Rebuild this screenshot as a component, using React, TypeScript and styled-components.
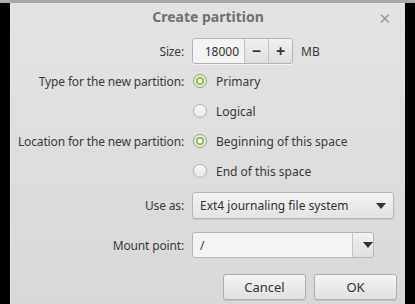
import React, { FC } from 'react'
import styled, { createGlobalStyle } from 'styled-components'

const GlobalStyle = createGlobalStyle`
  html, body {
    margin: 0;
    padding: 0;
    background: #000;
    overflow: hidden;
  }
  body {
    font-family: "Noto Sans", "DejaVu Sans", sans-serif;
  }
`

const Screen = styled.div`
  width: 415px;
  height: 304px;
  display: flex;
  flex-direction: column;
  background: #000;
`
const TopStrip = styled.div`
  height: 3px;
  background: #a9a9a9;
`
const Stage = styled.div`
  flex: 1;
  display: flex;
  padding: 0 10px;
`
const Dialog = styled.section`
  flex: 1;
  display: flex;
  flex-direction: column;
  background: linear-gradient(#e3e3e3, #d8d8d8);
  border-left: 1px solid #ededed;
  color: #3a3a3a;
  font-size: 12px;
`
const TitleBar = styled.header`
  height: 27px;
  display: flex;
  align-items: center;
  justify-content: center;
  position: relative;
`
const Title = styled.h2`
  margin: 0;
  font-size: 14px;
  font-weight: bold;
  color: #707070;
`
const Close = styled.span`
  position: absolute;
  right: 14px;
  top: 5px;
  font-size: 15px;
  font-weight: bold;
  color: #9a9a9a;
`
const Form = styled.div`
  display: grid;
  grid-template-columns: 173px 1fr;
  column-gap: 8px;
  padding: 7px 11px 0 0;
  align-items: center;
`
const Label = styled.span<{ $h: number; $mt?: number }>`
  height: ${p => p.$h}px;
  margin-top: ${p => p.$mt ?? 0}px;
  display: flex;
  align-items: center;
  justify-content: flex-end;
  white-space: nowrap;
  letter-spacing: -0.15px;
`
const Cell = styled.div<{ $h: number; $mt?: number }>`
  height: ${p => p.$h}px;
  margin-top: ${p => p.$mt ?? 0}px;
  display: flex;
  align-items: center;
  white-space: nowrap;
`
const Spin = styled.div`
  width: 99px;
  height: 24px;
  display: flex;
  border: 1px solid #b3b3b3;
  border-radius: 3px;
  overflow: hidden;
  box-shadow: 0 1px 0 rgba(255,255,255,0.6);
`
const SpinEntry = styled.span`
  flex: 1;
  display: flex;
  align-items: center;
  justify-content: flex-end;
  padding-right: 5px;
  background: #f4f4f4;
  color: #333;
`
const SpinButton = styled.span`
  width: 23px;
  display: flex;
  align-items: center;
  justify-content: center;
  border-left: 1px solid #c2c2c2;
  background: linear-gradient(#f1f1f1, #dedede);
  font-size: 16px;
  font-weight: bold;
  color: #333;
`
const Unit = styled.span`
  margin-left: 8px;
`
const Radio = styled.span<{ $on?: boolean }>`
  width: 12px;
  height: 12px;
  border-radius: 50%;
  margin-left: 1px;
  margin-right: 9px;
  border: 1px solid ${p => (p.$on ? '#8ea660' : '#b4b4b4')};
  background: ${p =>
    p.$on
      ? 'radial-gradient(circle, #f7fbe9 0 2px, #9db86a 2.5px 4px, #e7eed8 4.5px)'
      : 'linear-gradient(#fafafa, #e8e8e8)'};
`
const Combo = styled.div`
  flex: 1;
  height: 25px;
  display: flex;
  align-items: center;
  padding: 0 7px;
  border: 1px solid #b6b6b6;
  border-radius: 3px;
  background: linear-gradient(#f3f3f3, #e3e3e3);
  box-shadow: 0 1px 1px rgba(0,0,0,0.08);
  color: #333;
`
const Arrow = styled.span`
  margin-left: auto;
  width: 0;
  height: 0;
  border-left: 5px solid transparent;
  border-right: 5px solid transparent;
  border-top: 6px solid #333;
`
const Entry = styled.div`
  width: 180px;
  height: 24px;
  display: flex;
  border: 1px solid #b6b6b6;
  border-radius: 3px;
  overflow: hidden;
`
const EntryText = styled.span`
  flex: 1;
  display: flex;
  align-items: center;
  padding-left: 7px;
  background: #f5f5f5;
  color: #333;
`
const EntryButton = styled.span`
  width: 20px;
  display: flex;
  align-items: center;
  justify-content: center;
  border-left: 1px solid #c4c4c4;
  background: linear-gradient(#f1f1f1, #e0e0e0);
`
const Buttons = styled.div`
  display: flex;
  justify-content: flex-end;
  gap: 8px;
  padding: 16px 8px 0 0;
`
const Button = styled.button`
  width: 83px;
  height: 26px;
  border: 1px solid #afafaf;
  border-radius: 3px;
  background: linear-gradient(#f4f4f4, #e1e1e1);
  box-shadow: 0 1px 1px rgba(0,0,0,0.1);
  font: inherit;
  font-size: 13px;
  color: #333;
  padding: 0;
`

type Option = { text: string; on?: boolean }

const typeOptions: Option[] = [
  { text: 'Primary', on: true },
  { text: 'Logical' },
]
const locationOptions: Option[] = [
  { text: 'Beginning of this space', on: true },
  { text: 'End of this space' },
]

const RadioGroup: FC<{ label: string; options: Option[]; mt?: number }> = ({ label, options, mt }) => (
  <>
    {options.map((o, i) => (
      <React.Fragment key={o.text}>
        <Label $h={30} $mt={i === 0 ? mt : 0}>{i === 0 ? label : ''}</Label>
        <Cell $h={30} $mt={i === 0 ? mt : 0}>
          <Radio $on={o.on} />
          {o.text}
        </Cell>
      </React.Fragment>
    ))}
  </>
)

const App: FC = () => {
  return (
    <Screen>
      <GlobalStyle />
      <TopStrip />
      <Stage>
        <Dialog>
          <TitleBar>
            <Title>Create partition</Title>
            <Close>✕</Close>
          </TitleBar>
          <Form>
            <Label $h={26} $mt={1}>Size:</Label>
            <Cell $h={26} $mt={1}>
              <Spin>
                <SpinEntry>18000</SpinEntry>
                <SpinButton>−</SpinButton>
                <SpinButton>+</SpinButton>
              </Spin>
              <Unit>MB</Unit>
            </Cell>
            <RadioGroup label="Type for the new partition:" options={typeOptions} mt={2} />
            <RadioGroup label="Location for the new partition:" options={locationOptions} />
            <Label $h={27} $mt={6}>Use as:</Label>
            <Cell $h={27} $mt={6}>
              <Combo>
                Ext4 journaling file system
                <Arrow />
              </Combo>
            </Cell>
            <Label $h={26} $mt={13}>Mount point:</Label>
            <Cell $h={26} $mt={13}>
              <Entry>
                <EntryText>/</EntryText>
                <EntryButton><Arrow /></EntryButton>
              </Entry>
            </Cell>
          </Form>
          <Buttons>
            <Button>Cancel</Button>
            <Button>OK</Button>
          </Buttons>
        </Dialog>
      </Stage>
    </Screen>
  )
}

export default App
